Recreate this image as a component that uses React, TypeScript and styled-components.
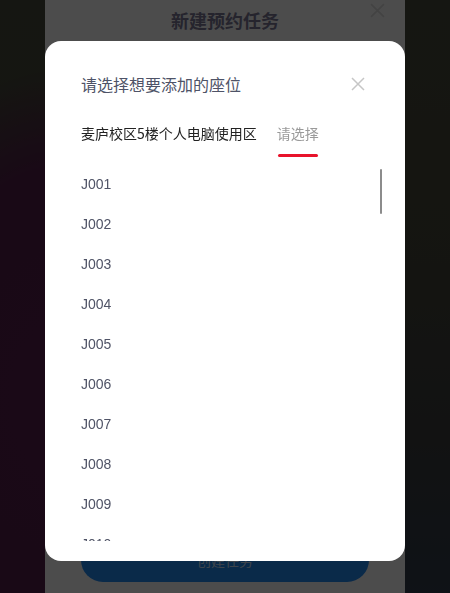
import React from "react";
import styled, { createGlobalStyle } from "styled-components";

const GlobalStyle = createGlobalStyle`
  html, body {
    margin: 0;
    padding: 0;
    height: 100%;
    overflow: hidden;
  }
  body {
    font-family: "Liberation Sans", "Noto Sans CJK SC", sans-serif;
    background:
      radial-gradient(ellipse 210px 330px at 60px 400px, #58214e 0%, #55204b 70%, rgba(85,32,75,0) 100%),
      linear-gradient(180deg, #494c3c 0%, #45453a 45%, #3c3e3f 75%, #323d4d 100%);
  }
`;

const Page = styled.div`
  width: 360px;
  height: 100vh;
  margin: 0 auto;
  background: #ffffff;
  display: flex;
  flex-direction: column;
`;

const PageHeader = styled.div`
  display: grid;
  grid-template-columns: 1fr auto 1fr;
  padding: 3px 20px 0 20px;
`;

const PageTitle = styled.h1`
  grid-column: 2;
  margin: 4px 0 0 0;
  font-family: "Noto Sans CJK SC", sans-serif;
  font-size: 18px;
  line-height: 26px;
  font-weight: 700;
  color: #7d7a97;
`;

const PageClose = styled.span`
  grid-column: 3;
  justify-self: end;
  display: flex;
  width: 15px;
  height: 15px;
`;

const CreateButton = styled.button`
  margin: auto 36px 11px 36px;
  height: 44px;
  border: none;
  border-radius: 22px;
  background: #228cf6;
  color: rgba(255, 255, 255, 0.8);
  font-family: "Noto Sans CJK SC", sans-serif;
  font-size: 14px;
`;

const Overlay = styled.div`
  position: fixed;
  inset: 0;
  background: rgba(0, 0, 0, 0.7);
  display: flex;
  justify-content: center;
  align-items: flex-start;
  padding-top: 41px;
`;

const Modal = styled.div`
  width: 360px;
  height: 520px;
  box-sizing: border-box;
  background: #ffffff;
  border-radius: 16px;
  display: flex;
  flex-direction: column;
  padding: 32px 0 20px 0;
`;

const ModalHeader = styled.div`
  display: flex;
  justify-content: space-between;
  align-items: center;
  padding: 0 40px 0 36px;
  height: 22px;
`;

const ModalTitle = styled.h2`
  margin: 0;
  font-family: "Noto Sans CJK SC", sans-serif;
  font-size: 16px;
  line-height: 22px;
  font-weight: 400;
  color: #4e5367;
`;

const CloseButton = styled.span`
  display: flex;
  width: 14px;
  height: 14px;
  margin-top: -1px;
`;

const Tabs = styled.div`
  display: flex;
  gap: 20px;
  padding: 0 36px;
  margin-top: 28px;
`;

const Tab = styled.div<{ $active?: boolean }>`
  position: relative;
  font-family: "Noto Sans CJK SC", sans-serif;
  font-size: 14px;
  line-height: 20px;
  padding-bottom: 14px;
  color: ${(p) => (p.$active ? "#9a9a9a" : "#222222")};
  &::after {
    content: "";
    display: ${(p) => (p.$active ? "block" : "none")};
    position: absolute;
    left: 1px;
    right: 1px;
    bottom: 0;
    height: 3px;
    border-radius: 2px;
    background: #e8132b;
  }
`;

const ListWrap = styled.div`
  position: relative;
  flex: 1;
  overflow: hidden;
  margin-top: 7px;
`;

const List = styled.ul`
  list-style: none;
  margin: 0;
  padding: 0;
`;

const Item = styled.li`
  height: 40px;
  line-height: 40px;
  padding-left: 36px;
  font-family: "Liberation Sans", "Noto Sans CJK SC", sans-serif;
  font-size: 14px;
  color: #4f5366;
`;

const ScrollThumb = styled.div`
  position: absolute;
  top: 5px;
  right: 23px;
  width: 2px;
  height: 45px;
  border-radius: 1px;
  background: #8c8c8c;
`;

const XIcon = ({ color, width }: { color: string; width: number }) => (
  <svg viewBox="0 0 14 14" width="100%" height="100%">
    <path d="M1 1L13 13M13 1L1 13" stroke={color} strokeWidth={width} fill="none" />
  </svg>
);

const seats = Array.from({ length: 12 }, (_, i) => `J${String(i + 1).padStart(3, "0")}`);

export default function App() {
  return (
    <>
      <GlobalStyle />
      <Page>
        <PageHeader>
          <PageTitle>新建预约任务</PageTitle>
          <PageClose>
            <XIcon color="#e0e0e0" width={1.6} />
          </PageClose>
        </PageHeader>
        <CreateButton>创建任务</CreateButton>
      </Page>
      <Overlay>
        <Modal>
          <ModalHeader>
            <ModalTitle>请选择想要添加的座位</ModalTitle>
            <CloseButton>
              <XIcon color="#c6c6c6" width={1.5} />
            </CloseButton>
          </ModalHeader>
          <Tabs>
            <Tab>麦庐校区5楼个人电脑使用区</Tab>
            <Tab $active>请选择</Tab>
          </Tabs>
          <ListWrap>
            <List>
              {seats.map((s) => (
                <Item key={s}>{s}</Item>
              ))}
            </List>
            <ScrollThumb />
          </ListWrap>
        </Modal>
      </Overlay>
    </>
  );
}
